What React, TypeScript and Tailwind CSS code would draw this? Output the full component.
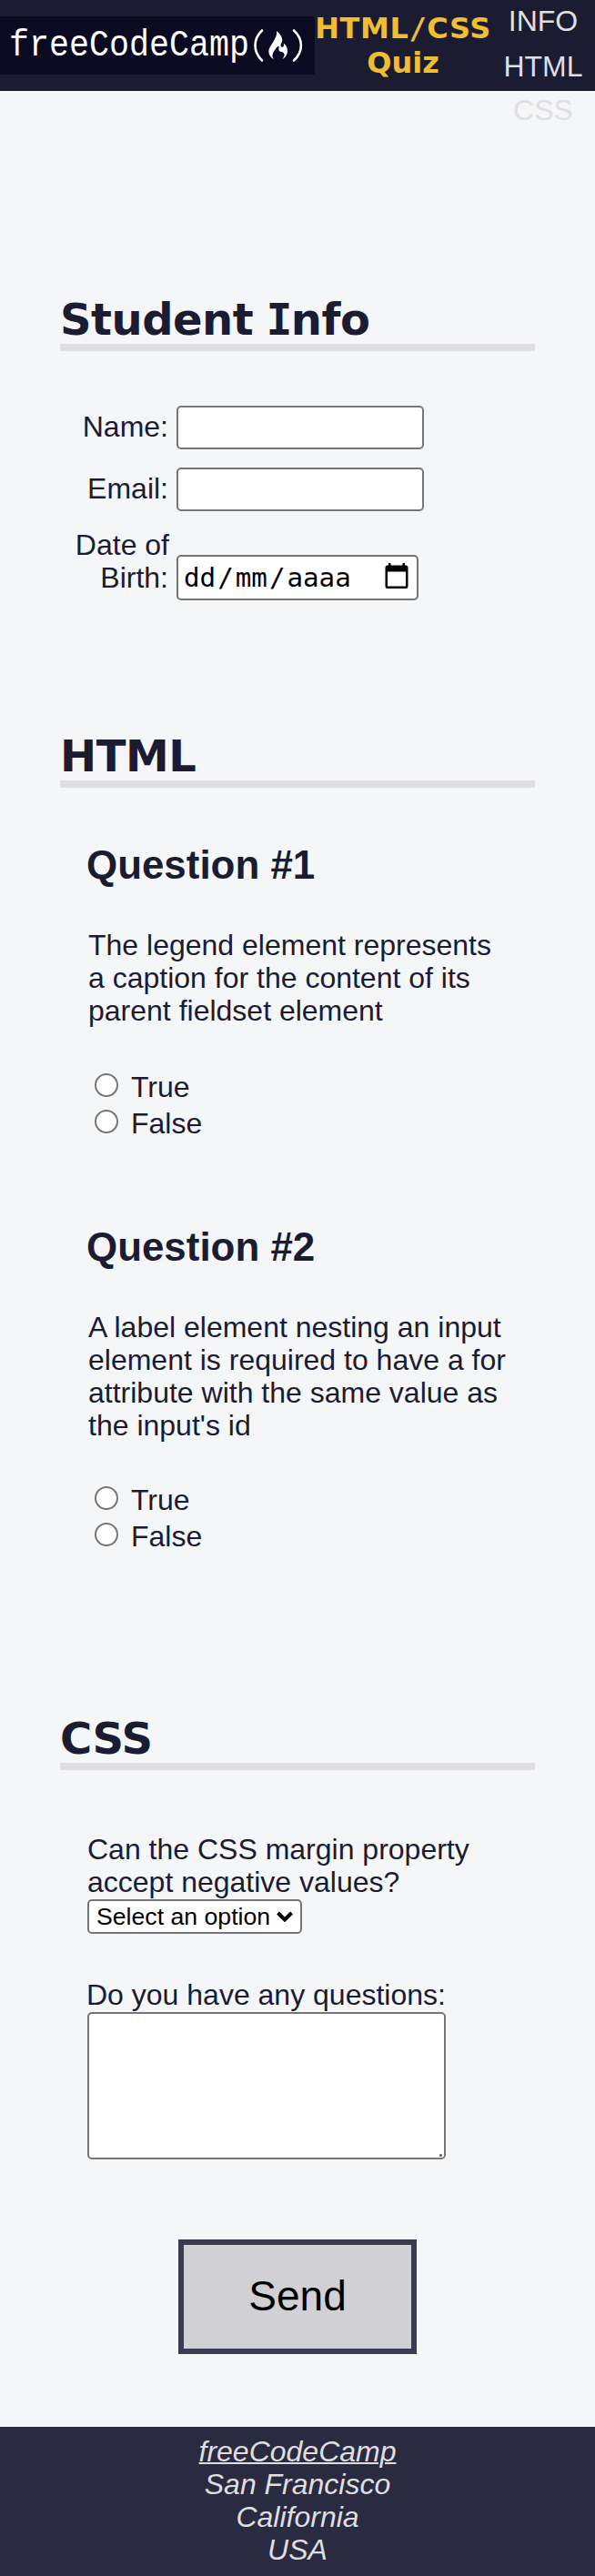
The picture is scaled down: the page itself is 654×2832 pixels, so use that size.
import type { ReactNode } from 'react';

function SectionTitle({ children }: { children: ReactNode }) {
  return (
    <h2 className="h-[62px] border-b-8 border-[#dfdfe2] font-['DejaVu_Sans',sans-serif] text-[48px] leading-[54px] font-bold tracking-[-0.5px] whitespace-nowrap">
      {children}
    </h2>
  );
}

function Field({ label, children }: { label: string; children: ReactNode }) {
  return (
    <div className="flex items-start">
      <label className="mt-[5px] w-[119px] text-right">{label}</label>
      {children}
    </div>
  );
}

function Choice({ name, text }: { name: string; text: string }) {
  return (
    <label className="flex h-10 items-start">
      <input
        type="radio"
        name={name}
        className="mt-[3px] ml-[7px] size-[26px] appearance-none rounded-full border-2 border-[#767676] bg-white"
      />
      <span className="ml-[14px]">{text}</span>
    </label>
  );
}

function Question({ id, title, lines }: { id: string; title: string; lines: string[] }) {
  return (
    <fieldset className="pl-[31px]">
      <h3 className="-ml-[2px] text-[43.9px] leading-[50px] font-bold">{title}</h3>
      <p className="mt-[45px] whitespace-nowrap">
        {lines.map((line) => (
          <span key={line} className="block">
            {line}
          </span>
        ))}
      </p>
      <div className={lines.length > 3 ? 'mt-[46px]' : 'mt-[48px]'}>
        <Choice name={id} text="True" />
        <Choice name={id} text="False" />
      </div>
    </fieldset>
  );
}

function Logo() {
  return (
    <div className="flex h-16 w-[346px] shrink-0 items-center bg-[#0a0a23] text-white">
      <span className="ml-[10px] w-[264px] origin-center scale-y-110 font-['Liberation_Mono',monospace] text-[36.67px] leading-[40px]">
        freeCodeCamp
      </span>
      <svg width="60" height="40" viewBox="0 0 60 40" fill="none" className="ml-[3px]">
        <path d="M11 3.500C1 13 1 27 11 36.500" stroke="white" strokeWidth="2.600" strokeLinecap="round" />
        <path d="M46 3.500C56.500 13 56.500 27 46 36.500" stroke="white" strokeWidth="2.600" strokeLinecap="round" />
        <path
          fill="white"
          d="M27 4C29 5.500 33.500 10 33.300 14.500C33.200 16.500 31.500 18 31.500 20C31.500 22 35 22.500 35 19.500C35 18.500 34.700 18 34.700 17.500C37 19 39 22 39 26C39 30 37 33 33 35.500C35.500 32.500 36.500 30 34.500 28C33 26.500 30 27.500 29.500 25C29.200 23.500 30 21.500 29.300 20.500C26.500 22 22.500 28 22.500 31C22.500 33 23 34 24.500 35.500C20.500 33.500 18.300 30.500 18.300 26.500C18.300 20 28.500 13 27 4Z"
        />
      </svg>
    </div>
  );
}

export default function App() {
  return (
    <div className="flex h-[2832px] w-[654px] flex-col bg-[#f5f6f7] font-['Liberation_Sans',Arial,sans-serif] text-[32px] leading-[36px] text-[#1b1b32]">
      <header className="flex h-[100px] items-center bg-[#1b1b32]">
        <Logo />
        <h1 className="w-[194px] shrink-0 text-center font-['DejaVu_Sans',sans-serif] text-[32px] leading-[38px] font-bold whitespace-nowrap text-[#f1be32]">
          <span className="-mx-1 block tracking-[0.6px]">
            HTML<span className="font-['DejaVu_Sans_Mono',monospace]">/</span>CSS
          </span>
          <span className="block">Quiz</span>
        </h1>
        <nav className="h-[100px] w-[114px] text-center text-[#dfdfe2]">
          <a className="mt-[5px] block">INFO</a>
          <a className="mt-[14px] block">HTML</a>
          <a className="mt-[12px] block">CSS</a>
        </nav>
      </header>

      <main className="flex flex-col px-[66px] pt-[224px]">
        <section className="h-[480px]">
          <SectionTitle>
            Student{' '}
            <span className="-mr-px -ml-[2px] font-['DejaVu_Sans_Mono',monospace]">I</span>nfo
          </SectionTitle>
          <div className="mt-[60px]">
            <Field label="Name:">
              <input className="ml-[9px] h-12 w-[272px] rounded-[5px] border-2 border-[#767676] bg-white" />
            </Field>
            <div className="h-5" />
            <Field label="Email:">
              <input className="ml-[9px] h-12 w-[272px] rounded-[5px] border-2 border-[#767676] bg-white" />
            </Field>
            <div className="mt-[19px] flex items-start">
              <label className="w-[119px] text-right">
                <span className="-mr-px block">Date of</span>
                <span className="block">Birth:</span>
              </label>
              <div className="mt-[29px] ml-[9px] flex h-[50px] w-[266px] items-center rounded-[5px] border-2 border-[#767676] bg-white pr-[9px] pl-[6px] font-['DejaVu_Sans_Mono',monospace] text-[29.200px] text-black">
                <span className="flex gap-[2px]">
                  <span>dd</span>
                  <span>/</span>
                  <span>mm</span>
                  <span>/</span>
                  <span>aaaa</span>
                </span>
                <svg width="26" height="28" viewBox="0 0 26 28" className="mt-[-4px] ml-auto">
                  <path
                    fillRule="evenodd"
                    d="M4 0H6.500V2.500H19.500V0H22V2.500H23Q25.500 2.500 25.500 5V25.500Q25.500 28 23 28H3Q0.500 28 0.500 25.500V5Q0.500 2.500 3 2.500H4ZM3 9.500V25.500H23V9.500Z"
                  />
                </svg>
              </div>
            </div>
          </div>
        </section>

        <section className="h-[1080px]">
          <SectionTitle>HTML</SectionTitle>
          <div className="mt-[60px]">
            <Question
              id="q1"
              title="Question #1"
              lines={[
                'The legend element represents',
                'a caption for the content of its',
                'parent fieldset element',
              ]}
            />
            <div className="h-[89px]" />
            <Question
              id="q2"
              title="Question #2"
              lines={[
                'A label element nesting an input',
                'element is required to have a for',
                'attribute with the same value as',
                "the input's id",
              ]}
            />
          </div>
        </section>

        <section className="h-[784px]">
          <SectionTitle>CSS</SectionTitle>
          <div className="mt-[69px] pl-[30px]">
            <p>
              Can the CSS margin property
              <br />
              accept negative values?
            </p>
            <div className="mt-px flex h-[38px] w-[236px] items-center rounded-[5px] border-2 border-[#767676] bg-white pl-2 text-[26.670px] leading-[30px] whitespace-nowrap text-black">
              Select an option
              <svg width="18" height="12" viewBox="0 0 18 12" fill="none" className="ml-[7px]">
                <path d="M1.500 2L9 9.500L16.500 2" stroke="black" strokeWidth="4" />
              </svg>
            </div>
            <p className="mt-[49px] -ml-px">Do you have any questions:</p>
            <div className="relative mt-px h-[162px] w-[394px]">
              <textarea className="block h-full w-full resize-none rounded-[5px] border-2 border-[#767676] bg-white" />
              <span className="absolute right-1 bottom-[3px] size-[3px] rounded-full bg-[#555]" />
            </div>
          </div>
          <button className="mx-auto mt-[88px] flex h-[126px] w-[262px] items-center justify-center border-6 border-[#3b3b4f] bg-[#d0d0d5] pb-[2px] text-[46px] leading-[52px] text-black">
            Send
          </button>
        </section>
      </main>

      <footer className="h-[164px] bg-[#2a2a40] pt-[9px] text-center text-[#dfdfe2]">
        <address className="italic">
          <a className="block underline decoration-2">freeCodeCamp</a>
          San Francisco
          <br />
          California
          <br />
          USA
        </address>
      </footer>
    </div>
  );
}
